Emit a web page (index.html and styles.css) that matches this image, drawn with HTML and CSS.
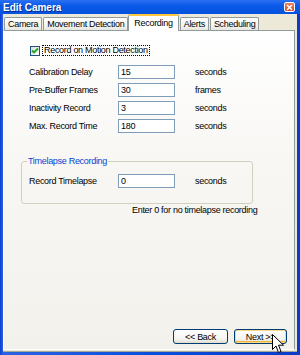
FILE: index.html
```html
<!DOCTYPE html>
<html lang="en">
<head>
    <meta charset="UTF-8">
    <title>Edit Camera</title>
    <link rel="stylesheet" href="styles.css">
</head>
<body>
    <div class="window">
        <div class="titlebar">
            <span class="title">Edit Camera</span>
            <span class="close">
                <svg width="7" height="7" viewBox="0 0 7 7"><path d="M1 1L6 6M6 1L1 6" stroke="#fff" stroke-width="1.6"/></svg>
            </span>
        </div>
        <div class="frame">
            <div class="tabs">
                <div class="tab">Camera</div>
                <div class="tab">Movement Detection</div>
                <div class="tab active">Recording</div>
                <div class="tab">Alerts</div>
                <div class="tab">Scheduling</div>
            </div>
            <div class="panel">
                <div class="check-row">
                    <span class="checkbox">
                        <svg width="8" height="8" viewBox="0 0 8 8"><path d="M1 3.5L3 5.5L7 1.5" fill="none" stroke="#21a121" stroke-width="1.8"/></svg>
                    </span>
                    <span class="focus">Record on Motion Detection</span>
                </div>
                <div class="fields">
                    <div class="field">
                        <span class="field-label">Calibration Delay</span>
                        <span class="textbox">15</span>
                        <span class="unit">seconds</span>
                    </div>
                    <div class="field">
                        <span class="field-label">Pre-Buffer Frames</span>
                        <span class="textbox">30</span>
                        <span class="unit">frames</span>
                    </div>
                    <div class="field">
                        <span class="field-label">Inactivity Record</span>
                        <span class="textbox">3</span>
                        <span class="unit">seconds</span>
                    </div>
                    <div class="field">
                        <span class="field-label">Max. Record Time</span>
                        <span class="textbox">180</span>
                        <span class="unit">seconds</span>
                    </div>
                </div>
                <fieldset class="group">
                    <legend>Timelapse Recording</legend>
                    <div class="field">
                        <span class="field-label">Record Timelapse</span>
                        <span class="textbox">0</span>
                        <span class="unit">seconds</span>
                    </div>
                </fieldset>
                <div class="hint">Enter 0 for no timelapse recording</div>
                <div class="buttons">
                    <button class="btn">&lt;&lt; Back</button>
                    <button class="btn default">Next &gt;&gt;</button>
                </div>
            </div>
        </div>
        <svg class="cursor" width="13" height="20" viewBox="0 0 13 20">
            <path d="M0.5 0.5L0.5 15.5L4 12L6.5 18.5L9 17.5L6.5 11.2L11.5 11.2Z" fill="#fff" stroke="#000" stroke-width="1"/>
        </svg>
    </div>
</body>
</html>
```

FILE: styles.css
```css
* {
    box-sizing: border-box;
}
body {
    margin: 0;
    font-family: "Liberation Sans", Arial, sans-serif;
    font-size: 9px;
    letter-spacing: -0.3px;
    color: #000;
}
.window {
    position: relative;
    width: 300px;
    height: 355px;
    display: flex;
    flex-direction: column;
    background: linear-gradient(90deg, #0a3fd4, #2a62e0 1%, #0a4fdc 50%, #0a3bc8);
}
.titlebar {
    height: 14px;
    display: flex;
    align-items: center;
    justify-content: space-between;
    padding: 0 5px 0 3px;
    background: linear-gradient(#2a70f2, #0a5ae8 40%, #0553dd);
}
.title {
    color: #fff;
    font-size: 10px;
    font-weight: bold;
    letter-spacing: 0;
    text-shadow: 1px 1px 0 #0a2a8a;
}
.close {
    width: 11px;
    height: 10px;
    display: flex;
    align-items: center;
    justify-content: center;
    border: 1px solid #fff;
    border-radius: 2px;
    background: linear-gradient(#e8805f, #d44a25);
}
.frame {
    flex: 1;
    margin: 0 3px 3px 3px;
    padding-bottom: 1px;
    display: flex;
    flex-direction: column;
    background: #ece9d8;
    border-bottom: 1px solid #aca899;
}
.tabs {
    height: 17px;
    display: flex;
    align-items: flex-end;
    padding-left: 1px;
    margin-bottom: -1px;
}
.tab {
    height: 14px;
    line-height: 12px;
    padding: 0 3px;
    margin-right: 1px;
    border: 1px solid #919b9c;
    border-bottom: none;
    border-radius: 2px 2px 0 0;
    background: linear-gradient(#fff, #f3f3ef 60%, #e4e3dc);
}
.tab.active {
    position: relative;
    height: 17px;
    line-height: 14px;
    margin: 0 0 0 -1px;
    padding: 0 5px;
    background: #fff;
    border-top: 2px solid #ffc83c;
    z-index: 1;
}
.tab.active + .tab {
    margin-left: 1px;
}
.panel {
    flex: 1;
    margin-right: 2px;
    display: flex;
    flex-direction: column;
    padding: 14px 7px 5px 25px;
    border: 1px solid #919b9c;
    border-left-color: #fff;
    border-bottom-color: #fff;
    background: linear-gradient(#fff, #f8f7f4 40%, #f2f1ec);
}
.check-row {
    display: flex;
    align-items: center;
    height: 11px;
}
.checkbox {
    width: 10px;
    height: 10px;
    margin: 0 2px 0 1px;
    display: flex;
    align-items: center;
    justify-content: center;
    border: 1px solid #1c5180;
    background: linear-gradient(135deg, #dcdcd7, #fff);
}
.focus {
    padding: 0 1px;
    line-height: 9px;
    border: 1px dotted #000;
}
.fields {
    display: flex;
    flex-direction: column;
    gap: 4px;
    margin-top: 9px;
}
.field {
    display: flex;
    align-items: center;
    height: 14px;
}
.field-label {
    width: 89px;
}
.textbox {
    width: 57px;
    height: 14px;
    line-height: 12px;
    padding: 0 2px;
    border: 1px solid #7f9db9;
    background: #fff;
}
.unit {
    margin-left: 20px;
}
.group {
    width: 232px;
    margin: 23px 0 0 -8px;
    padding: 7px 7px 15px 7px;
    border: 1px solid #d0d0bf;
    border-radius: 3px;
}
.group legend {
    margin-left: -2px;
    padding: 0 1px;
    line-height: 11px;
    color: #0046d5;
}
.hint {
    margin: 1px 0 0 103px;
    line-height: 11px;
}
.buttons {
    margin-top: auto;
    display: flex;
    justify-content: flex-end;
    gap: 6px;
}
.btn {
    width: 55px;
    height: 15px;
    padding: 0;
    font-family: inherit;
    font-size: 9px;
    letter-spacing: -0.3px;
    color: #000;
    border: 1px solid #003c74;
    border-radius: 3px;
    background: linear-gradient(#fff, #f5f4f0 70%, #dedbd0);
}
.btn.default {
    width: 53px;
    box-shadow: inset 0 0 0 1px #fbd985, inset 0 -1px 0 1px #f0b43a;
}
.cursor {
    position: absolute;
    left: 272px;
    top: 334px;
}
```
